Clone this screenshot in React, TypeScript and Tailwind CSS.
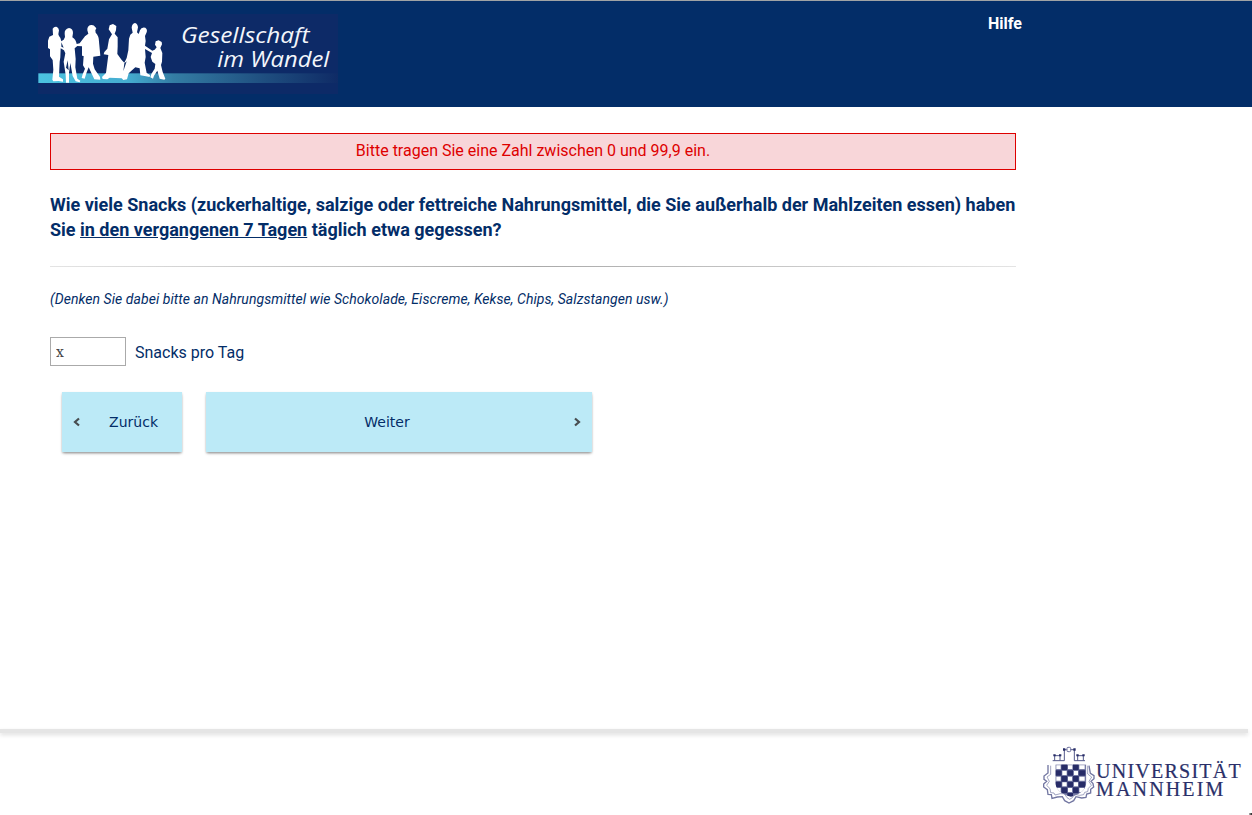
import React from 'react';

function SocietyLogo() {
  return (
    <svg className="mt-[14px] ml-[38px] block h-20 w-[300px] shrink-0" viewBox="24 42 900 240" role="img">
      <defs>
        <linearGradient id="band" x1="0" x2="1" y1="0" y2="0">
          <stop offset="0" stopColor="#4cc3e0" />
          <stop offset="0.3" stopColor="#45acd0" />
          <stop offset="0.45" stopColor="#347da4" />
          <stop offset="0.75" stopColor="#1f4f80" />
          <stop offset="1" stopColor="#0f2b66" />
        </linearGradient>
      </defs>
      <rect x="24" y="42" width="900" height="240" fill="#0d2a67" />
      <rect x="25" y="220" width="899" height="29" fill="url(#band)" />
      <g fill="#fff">
        <path d="M68 86Q72 79 79 80Q86 82 87 91L85 103L87 108Q94 115 94 124L101 119L105 111L104 101Q103 87 117 84Q129 86 129 99L127 112Q138 119 140 132L149 130L165 109L175 101L172 91Q171 77 183 75Q192 74 195 80L199 85L196 91L197 98Q207 108 207 125L211 167L190 170L189 191L194 208L210 231L211 239L193 238L176 202L169 220L164 236L155 234L158 223L165 206L159 196L161 168L156 167L156 139L142 138L134 145L137 177L136 202L142 236L151 242L149 247L137 244L128 228L121 189L117 219L117 248L108 248L107 225L101 185L106 160L102 151L92 145L91 172L89 185L88 207L87 230L99 238L99 245L86 243L70 244L67 239L70 209L68 180L60 169L60 148L54 144V122L58 110L69 105Z" />
        <path d="M240 94L236 88L239 76L249 72L259 78L258 91L254 101L263 112L263 140L262 162L275 180L283 188L290 174L295 151L297 116L301 104L308 98L305 83Q306 71 315 69Q323 71 324 82L321 97L326 102L330 91Q334 80 346 83Q353 88 350 97L345 108L347 123L345 137L367 152L374 149L380 142L375 134L377 124L386 121L395 126L396 133L391 144L397 159L396 185L393 195L398 216L406 236L403 239L389 236L382 212L372 227L369 236L361 232L364 222L374 206L376 192L367 185L362 171L366 159L345 147L347 171L344 188L350 219L360 225L359 231L344 228L331 226L329 205L316 202L296 220L291 238L280 240L275 235L239 233L232 238L218 237L216 231L228 219L235 165L221 163L223 156L232 146L237 118L246 103Z" />
      </g>
      <path d="M94 127L101 143L94 140ZM108 203L113 181L116 211ZM283 190L290 184L280 214Z" fill="#123067" />
      <g fill="#f3f6fb" fontFamily='"Open Sans", "Noto Sans", sans-serif' fontStyle="italic" fontSize="64">
        <text x="453" y="130" textLength="386" lengthAdjust="spacingAndGlyphs">Gesellschaft</text>
        <text x="562" y="200" textLength="336" lengthAdjust="spacingAndGlyphs">im Wandel</text>
      </g>
    </svg>
  );
}

function UniversityLogo() {
  return (
    <svg className="block h-[68px] w-[216px]" viewBox="0 0 648 204" role="img">
      <defs>
        <clipPath id="shield"><path d="M57 72H150V128Q147 158 104 169Q60 158 57 128Z" /></clipPath>
      </defs>
      <g transform="translate(1 1)">
        <g fill="none" stroke="#7377a2" strokeWidth="4">
          <path d="M35 74V98L23 107V117L31 123L22 131V140L33 148L35 162L45 163L47 174L63 170L78 169L85 181L98 188L112 181L119 169L136 173L149 171L151 161L163 158V147L172 140L170 130L164 123L173 115V106L162 99L158 76" />
          <path d="M43 76V102L32 110L39 123L31 135L41 145L43 157L53 158L56 164L72 160L84 160L92 172L100 177L108 172L115 162L130 165L142 163L145 156L154 154L156 144L165 135L158 123L166 110L154 101V76" strokeWidth="2" />
        </g>
        <path d="M55 45V61M71 45V61M53 46H73M49 61H84V28H91M104 28H114V61H146M124 45V61M141 45V61M122 46H143" fill="none" stroke="#53588a" strokeWidth="3" />
        <rect x="92" y="21" width="11" height="13" rx="3" fill="none" stroke="#6a6e9b" strokeWidth="3" />
        <g fill="#272c67">
          <path d="M51 42h7v6h-7zM68 42h7v6h-7zM120 42h7v6h-7zM138 42h7v6h-7zM80 24h7v7h-7zM111 24h7v7h-7z" />
        </g>
        <g clipPath="url(#shield)">
          <rect x="56" y="72" width="96" height="98" fill="#777ba5" />
          <path fill="#fff" d="M60 75h13v11h-13zM95 75h13v11h-13zM129 75h16v11h-16zM78 92h13v12h-13zM113 92h12v12h-12zM60 109h13v12h-13zM95 109h12v12h-12zM129 109h16v12h-16zM78 126h13v12h-13zM113 126h12v12h-12zM60 143h13v12h-13zM95 143h12v12h-12zM129 143h14v12h-14z" />
          <path fill="#272c67" d="M75 72h18v17h-18zM110 72h17v17h-17zM57 90h19v16h-19zM93 90h17v16h-17zM127 90h20v16h-20zM75 107h18v17h-18zM110 107h17v17h-17zM57 124h19v17h-19zM93 124h17v17h-17zM127 124h20v17h-20zM75 141h18v18h-18zM110 141h17v18h-17zM93 158h17v14h-17z" />
        </g>
      </g>
      <g fill="#2a2f69" stroke="#2a2f69" strokeWidth="0.6" fontFamily='"Liberation Serif", serif' fontSize="60">
        <text x="180" y="113" textLength="434" lengthAdjust="spacing">UNIVERSITÄT</text>
        <text x="180" y="168" textLength="382" lengthAdjust="spacing">MANNHEIM</text>
      </g>
    </svg>
  );
}

function Chevron({ flip = false }: { flip?: boolean }) {
  return (
    <svg className={flip ? 'h-2.5 w-2 rotate-180' : 'h-2.5 w-2'} viewBox="0 0 8 10" fill="none" stroke="#484d50" strokeWidth="2.2">
      <path d="M7 1.5L3 5L7 8.5" />
    </svg>
  );
}

export default function App() {
  return (
    <div className="relative flex h-[815px] w-[1252px] flex-col overflow-hidden bg-white font-['Roboto',sans-serif] text-[#032d68]">
      <header className="flex h-[107px] shrink-0 bg-[#032d68] shadow-[inset_0_1px_0_#a0a3a5]">
        <SocietyLogo />
        <a className="mt-[14px] ml-[650px] text-base leading-5 font-bold text-white">Hilfe</a>
      </header>
      <main className="ml-[50px] w-[966px] grow pt-[26px]">
        <p className="flex h-[37px] items-center justify-center border border-[#de0000] bg-[#f8d6d9] pb-[2px] text-base text-[#de0000]">
          Bitte tragen Sie eine Zahl zwischen 0 und 99,9 ein.
        </p>
        <h1 className="mt-[22px] text-[18px] leading-[25px] font-bold whitespace-nowrap">
          Wie viele Snacks (zuckerhaltige, salzige oder fettreiche Nahrungsmittel, die Sie außerhalb der Mahlzeiten essen) haben<br />
          Sie <span className="underline">in den vergangenen 7 Tagen</span> täglich etwa gegessen?
        </h1>
        <div className="mt-6 h-px bg-linear-to-r from-[#e4e4e4] via-[#aaa] to-[#e4e4e4]" />
        <p className="mt-[22px] text-[14px] leading-5 tracking-[0.054px] italic">
          (Denken Sie dabei bitte an Nahrungsmittel wie Schokolade, Eiscreme, Kekse, Chips, Salzstangen usw.)
        </p>
        <label className="mt-7 flex items-center gap-[9px] text-base">
          <input className="h-[29px] w-[76px] border border-[#aaa] px-[5px] font-['DejaVu_Serif',serif] text-[14px] font-light text-[#444] outline-none" defaultValue="x" />
          <span className="pt-[3px]">Snacks pro Tag</span>
        </label>
        <div className="mt-[26px] ml-3 flex gap-6 font-['DejaVu_Sans',sans-serif] text-[14px]">
          <button className="flex h-[60px] w-[120px] items-center bg-[#bceaf7] pr-6 pl-[10px] shadow-[0_2px_3px_-1px_rgba(0,0,0,.4),0_1px_2px_rgba(0,0,0,.15)]">
            <Chevron />
            <span className="ml-auto">Zurück</span>
          </button>
          <button className="flex h-[60px] w-[386px] items-center bg-[#bceaf7] pr-[10px] shadow-[0_2px_3px_-1px_rgba(0,0,0,.4),0_1px_2px_rgba(0,0,0,.15)]">
            <span className="grow pr-[6px] text-center">Weiter</span>
            <Chevron flip />
          </button>
        </div>
      </main>
      <footer className="h-[86px] shrink-0">
        <div className="mr-1 h-1 bg-[#e5e5e5] shadow-[0_2px_4px_#dedede]" />
        <div className="flex justify-end pt-[7px]">
          <UniversityLogo />
        </div>
      </footer>
      <span className="absolute right-0 bottom-0 h-0.5 w-[3px] bg-linear-to-r from-[#bbb] to-[#222]" />
    </div>
  );
}
